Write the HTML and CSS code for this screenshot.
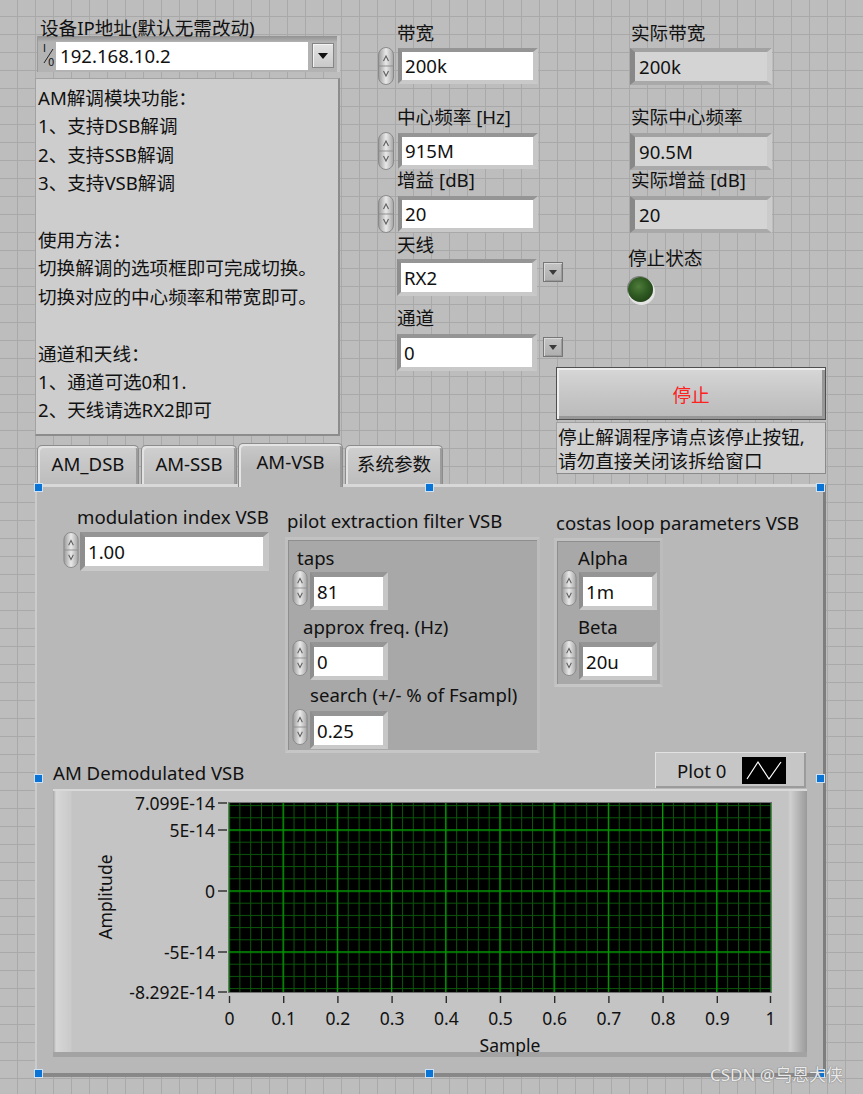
FILE: index.html
```html
<!DOCTYPE html>
<html lang="zh-CN">
<head>
<meta charset="utf-8">
<title>AM 解调</title>
<link rel="stylesheet" href="styles.css">
</head>
<body>
<svg class="defs" width="0" height="0" aria-hidden="true">
  <defs>
    <linearGradient id="spg" x1="0" y1="0" x2="1" y2="0">
      <stop offset="0" stop-color="#9a9a9a"/>
      <stop offset="0.5" stop-color="#e9e9e9"/>
      <stop offset="1" stop-color="#a4a4a4"/>
    </linearGradient>
    <symbol id="spinner" viewBox="0 0 16 38">
      <rect x="0.5" y="0.5" width="15" height="37" rx="7.5" fill="url(#spg)" stroke="#8a8a8a"/>
      <line x1="1" y1="19" x2="15" y2="19" stroke="#8f8f8f"/>
      <path d="M5.5 14 L8 9 L10.5 14" fill="none" stroke="#5e5e5e" stroke-width="1.1"/>
      <path d="M5.5 24 L8 29 L10.5 24" fill="none" stroke="#5e5e5e" stroke-width="1.1"/>
    </symbol>
  </defs>
</svg>

<div class="fp">
  <div class="top">
    <div class="col-left">
      <div class="lbl ip-lbl">设备IP地址(默认无需改动)</div>
      <div class="ipctl">
        <svg class="iosym" width="14" height="26" viewBox="0 0 14 26">
          <text x="1" y="10" class="io-t">I</text>
          <line x1="2" y1="21" x2="11" y2="7" stroke="#222" stroke-width="1"/>
          <text x="6" y="24" class="io-t">0</text>
        </svg>
        <div class="ipfld">192.168.10.2</div>
        <div class="ipbtn"><svg width="10" height="6" viewBox="0 0 10 6"><path d="M0 0 H10 L5 6 Z" fill="#111"/></svg></div>
      </div>
      <div class="note">
        <div>AM解调模块功能：</div>
        <div>1、支持DSB解调</div>
        <div>2、支持SSB解调</div>
        <div>3、支持VSB解调</div>
        <div class="gap"></div>
        <div>使用方法：</div>
        <div>切换解调的选项框即可完成切换。</div>
        <div>切换对应的中心频率和带宽即可。</div>
        <div class="gap"></div>
        <div>通道和天线：</div>
        <div>1、通道可选0和1.</div>
        <div>2、天线请选RX2即可</div>
      </div>
    </div>

    <div class="col-mid">
      <div class="lbl m-l1">带宽</div>
      <div class="num m-n1"><svg class="spin"><use href="#spinner"/></svg><div class="fld fw140">200k</div></div>
      <div class="lbl m-l2">中心频率 [Hz]</div>
      <div class="num m-n2"><svg class="spin"><use href="#spinner"/></svg><div class="fld fw140">915M</div></div>
      <div class="lbl m-l3">增益 [dB]</div>
      <div class="num m-n3"><svg class="spin"><use href="#spinner"/></svg><div class="fld fw140">20</div></div>
      <div class="lbl m-l4">天线</div>
      <div class="ring m-r1"><div class="fld rfld">RX2</div><div class="rbtn"><svg width="8" height="5" viewBox="0 0 8 5"><path d="M0 0 H8 L4 5 Z" fill="#3a3a3a"/></svg></div></div>
      <div class="lbl m-l5">通道</div>
      <div class="ring m-r2"><div class="fld rfld">0</div><div class="rbtn"><svg width="8" height="5" viewBox="0 0 8 5"><path d="M0 0 H8 L4 5 Z" fill="#3a3a3a"/></svg></div></div>
    </div>

    <div class="col-right">
      <div class="lbl r-l1">实际带宽</div>
      <div class="ind r-i1">200k</div>
      <div class="lbl r-l2">实际中心频率</div>
      <div class="ind r-i2">90.5M</div>
      <div class="lbl r-l3">实际增益 [dB]</div>
      <div class="ind r-i3">20</div>
      <div class="lbl r-l4">停止状态</div>
      <div class="led"></div>
      <div class="stop">停止</div>
      <div class="help">
        <div>停止解调程序请点该停止按钮,</div>
        <div>请勿直接关闭该拆给窗口</div>
      </div>
    </div>
  </div>

  <div class="tabctl">
    <div class="tabs">
      <div class="tab t1">AM_DSB</div>
      <div class="tab t2">AM-SSB</div>
      <div class="tab sel">AM-VSB</div>
      <div class="tab t4">系统参数</div>
    </div>
    <div class="tabpanel">
      <div class="row1">
        <div class="modblk">
          <div class="lbl mod-lbl">modulation index VSB</div>
          <div class="num mod-num"><svg class="spin s36"><use href="#spinner"/></svg><div class="fld fld-mod">1.00</div></div>
        </div>
        <div class="pilotblk">
          <div class="lbl pl-lbl">pilot extraction filter VSB</div>
          <div class="cluster pilot">
            <div class="lbl c-taps">taps</div>
            <div class="num crow"><svg class="spin s36"><use href="#spinner"/></svg><div class="fld fld-s">81</div></div>
            <div class="lbl c-appr">approx freq. (Hz)</div>
            <div class="num crow r2"><svg class="spin s36"><use href="#spinner"/></svg><div class="fld fld-s">0</div></div>
            <div class="lbl c-srch">search (+/- % of Fsampl)</div>
            <div class="num crow r3"><svg class="spin s36"><use href="#spinner"/></svg><div class="fld fld-s">0.25</div></div>
          </div>
        </div>
        <div class="costasblk">
          <div class="lbl co-lbl">costas loop parameters VSB</div>
          <div class="cluster costas">
            <div class="lbl c-alpha">Alpha</div>
            <div class="num crow"><svg class="spin s36"><use href="#spinner"/></svg><div class="fld fld-s">1m</div></div>
            <div class="lbl c-beta">Beta</div>
            <div class="num crow r2"><svg class="spin s36"><use href="#spinner"/></svg><div class="fld fld-s">20u</div></div>
          </div>
        </div>
      </div>

      <div class="ghead">
        <div class="lbl g-lbl">AM Demodulated VSB</div>
        <div class="legend">
          <span class="lg-name">Plot 0</span>
          <svg class="lg-icon" width="44" height="27" viewBox="0 0 44 27"><rect width="44" height="27" fill="#000"/><polyline points="5,22 16,5 27,22 39,5" fill="none" stroke="#fff" stroke-width="1.2"/></svg>
        </div>
      </div>

      <div class="graph">
        <svg class="chart" width="754" height="268" viewBox="0 0 754 268">
          <defs>
            <pattern id="gmv" x="175.5" y="0" width="10.84" height="268" patternUnits="userSpaceOnUse"><rect width="1" height="268" fill="#0a560a"/></pattern>
            <pattern id="gmh" x="0" y="-8.3" width="754" height="12.2" patternUnits="userSpaceOnUse"><rect width="754" height="1" fill="#0a560a"/></pattern>
            <pattern id="gMv" x="175.4" y="0" width="54.2" height="268" patternUnits="userSpaceOnUse"><rect width="1.3" height="268" fill="#009c00"/></pattern>
            <pattern id="gMh" x="0" y="-20.6" width="754" height="61" patternUnits="userSpaceOnUse"><rect width="754" height="1.3" fill="#009c00"/></pattern>
          </defs>
          <rect x="176" y="14" width="542" height="189" fill="#000"/>
          <rect x="176" y="14" width="542" height="189" fill="url(#gmv)"/>
          <rect x="176" y="14" width="542" height="189" fill="url(#gmh)"/>
          <rect x="176" y="14" width="542" height="189" fill="url(#gMv)"/>
          <rect x="176" y="14" width="542" height="189" fill="url(#gMh)"/>
          <rect x="175.5" y="13.5" width="543" height="190" fill="none" stroke="#707070"/>

          <g class="ticks">
            <line x1="165" y1="14" x2="174" y2="14"/>
            <line x1="165" y1="41" x2="174" y2="41"/>
            <line x1="165" y1="102" x2="174" y2="102"/>
            <line x1="165" y1="163" x2="174" y2="163"/>
            <line x1="165" y1="203" x2="174" y2="203"/>
            <line x1="176.5" y1="207" x2="176.5" y2="214"/>
            <line x1="230.7" y1="207" x2="230.7" y2="214"/>
            <line x1="284.9" y1="207" x2="284.9" y2="214"/>
            <line x1="339.1" y1="207" x2="339.1" y2="214"/>
            <line x1="393.3" y1="207" x2="393.3" y2="214"/>
            <line x1="447.5" y1="207" x2="447.5" y2="214"/>
            <line x1="501.7" y1="207" x2="501.7" y2="214"/>
            <line x1="555.9" y1="207" x2="555.9" y2="214"/>
            <line x1="610.1" y1="207" x2="610.1" y2="214"/>
            <line x1="664.3" y1="207" x2="664.3" y2="214"/>
            <line x1="717.5" y1="207" x2="717.5" y2="214"/>
          </g>
          <g class="ylab">
            <text x="162" y="14">7.099E-14</text>
            <text x="162" y="41">5E-14</text>
            <text x="162" y="102">0</text>
            <text x="162" y="163">-5E-14</text>
            <text x="162" y="203">-8.292E-14</text>
          </g>
          <g class="xlab">
            <text x="176.5" y="229">0</text>
            <text x="230.7" y="229">0.1</text>
            <text x="284.9" y="229">0.2</text>
            <text x="339.1" y="229">0.3</text>
            <text x="393.3" y="229">0.4</text>
            <text x="447.5" y="229">0.5</text>
            <text x="501.7" y="229">0.6</text>
            <text x="555.9" y="229">0.7</text>
            <text x="610.1" y="229">0.8</text>
            <text x="664.3" y="229">0.9</text>
            <text x="717.5" y="229">1</text>
          </g>
          <text class="xname" x="457" y="256">Sample</text>
          <text class="yname" x="52" y="108" transform="rotate(-90 52 108)">Amplitude</text>
        </svg>
      </div>
    </div>
  </div>

  <div class="hdl" style="left:34px;top:483px"></div>
  <div class="hdl" style="left:425px;top:483px"></div>
  <div class="hdl" style="left:816px;top:483px"></div>
  <div class="hdl" style="left:34px;top:774px"></div>
  <div class="hdl" style="left:816px;top:774px"></div>
  <div class="hdl" style="left:34px;top:1069px"></div>
  <div class="hdl" style="left:425px;top:1069px"></div>
  <div class="hdl" style="left:816px;top:1069px"></div>

  <div class="wm">CSDN @乌恩大侠</div>
</div>
</body>
</html>
```

FILE: styles.css
```css
* { box-sizing: border-box; }
html, body { margin: 0; padding: 0; }
body {
  font-family: "Noto Sans", "Noto Sans CJK SC", sans-serif;
  font-size: 18.6px;
  color: #111;
  background: #bdbdbd;
}
.defs { position: absolute; width: 0; height: 0; overflow: hidden; }

.fp {
  position: relative;
  width: 863px;
  height: 1094px;
  overflow: hidden;
  background-color: #bdbdbd;
  background-image:
    linear-gradient(to bottom, #a9a9a9 1px, transparent 1px),
    linear-gradient(to right, #a9a9a9 1px, transparent 1px);
  background-size: 18px 18px;
  background-position: 17px 16px;
}

.lbl { height: 22px; line-height: 22px; white-space: nowrap; }

/* ---------- top area ---------- */
.top { display: flex; height: 443px; }
.col-left { margin-left: 35px; width: 306px; flex: none; }
.col-mid { margin-left: 37px; width: 178px; flex: none; }
.col-right { width: 270px; flex: none; }

.ip-lbl { margin: 17px 0 0 5px; }
.ipctl {
  margin: -3px 0 0 2px;
  width: 303px;
  height: 36px;
  display: flex;
  align-items: flex-start;
  padding: 6px 0 0 5px;
  background: linear-gradient(to bottom, #939393 0, #a6a6a6 4px, #b3b3b3 6px);
  box-shadow: inset -3px 0 0 #c9c9c9, inset 1px 0 0 #9a9a9a;
}
.iosym { width: 14px; height: 26px; flex: none; }
.io-t { font-family: "DejaVu Sans", sans-serif; font-size: 10px; fill: #111; }
.ipfld {
  width: 252px; height: 28px; line-height: 28px;
  background: #fff; padding-left: 4px; flex: none;
}
.ipbtn {
  margin: 1px 0 0 4px; width: 22px; height: 25px; flex: none;
  display: flex; align-items: center; justify-content: center;
  background: linear-gradient(#e3e3e3, #c9c9c9);
  border: 1px solid #858585;
  box-shadow: inset 1px 1px 0 #f4f4f4;
}

.note {
  margin-top: 6px;
  width: 305px;
  height: 358px;
  background: #cdcdcd;
  border: 1px solid #a2a2a2;
  border-right: 2px solid #8c8c8c;
  border-bottom: 2px solid #8c8c8c;
  padding: 5px 2px;
  line-height: 28.4px;
  white-space: nowrap;
}
.note .gap { height: 28.4px; }

/* numeric controls */
.num { display: flex; align-items: center; }
.spin { width: 16px; height: 38px; flex: none; display: block; }
.spin.s36 { height: 36px; }
.fld {
  background: #fff;
  border-style: solid;
  border-width: 4px 5px 4px 4px;
  border-color: #959595 #c6c6c6 #c9c9c9 #8e8e8e;
  height: 36px;
  line-height: 28px;
  padding-left: 3px;
  margin-left: 4px;
  white-space: nowrap;
  flex: none;
}
.fw140 { width: 140px; }

.m-l1 { margin: 22px 0 0 19px; }
.m-n1 { margin-top: 3px; }
.m-l2 { margin: 21px 0 0 19px; }
.m-n2 { margin-top: 4px; }
.m-l3 { margin: -1px 0 0 19px; }
.m-n3 { margin-top: 4px; }
.m-l4 { margin: 1px 0 0 19px; }
.ring { display: flex; align-items: flex-start; margin-left: 19px; }
.m-r1 { margin-top: 3px; }
.m-l5 { margin: 11px 0 0 19px; }
.m-r2 { margin-top: 5px; }
.rfld { margin-left: 0; width: 140px; height: 37px; line-height: 29px; }
.rbtn {
  margin: 3px 0 0 6px; width: 20px; height: 20px; flex: none;
  display: flex; align-items: center; justify-content: center;
  background: linear-gradient(#c4c4c4, #aeaeae);
  border: 1px solid #767676;
  box-shadow: inset 1px 1px 0 #dadada, inset -1px -1px 0 #9a9a9a;
}

/* right column */
.r-l1 { margin: 22px 0 0 75px; }
.ind {
  margin-left: 74px;
  width: 142px;
  height: 37px;
  line-height: 29px;
  padding-left: 4px;
  background: #d4d4d4;
  border-style: solid;
  border-width: 4px 5px 4px 5px;
  border-color: #a2a2a2 #cbcbcb #a9a9a9 #888888;
  white-space: nowrap;
}
.r-i1 { margin-top: 4px; }
.r-l2 { margin: 21px 0 0 75px; }
.r-i2 { margin-top: 5px; }
.r-l3 { margin: -1px 0 0 75px; }
.r-i3 { margin-top: 5px; }
.r-l4 { margin: 14px 0 0 72px; }
.led {
  margin: 8px 0 0 72px;
  width: 25px; height: 25px;
  border-radius: 50%;
  background: radial-gradient(circle at 42% 38%, #4f7d3b 0, #2f5a22 45%, #1a3411 100%);
  box-shadow: 1px 2px 0 1px #e4e4e4, -1px -1px 0 #7e7e7e;
}
.stop {
  margin-top: 65px;
  width: 270px;
  height: 53px;
  border: 1px solid #4f4f4f;
  background: linear-gradient(#d7d7d7, #c4c4c4 60%, #bababa);
  box-shadow: inset 2px 2px 0 #eeeeee, inset -3px -3px 0 #979797;
  color: #ff2020;
  display: flex; align-items: center; justify-content: center;
}
.help {
  margin-top: 2px;
  height: 52px;
  background: #cfcfcf;
  border: 1px solid #a0a0a0;
  border-right-color: #8a8a8a;
  border-bottom-color: #8a8a8a;
  padding: 2px 1px;
  line-height: 23.5px;
  white-space: nowrap;
}

/* ---------- tab control ---------- */
.tabctl { margin-left: 35px; width: 791px; }
.tabs { display: flex; align-items: flex-end; height: 41px; padding-left: 2px; }
.tab {
  height: 39px;
  line-height: 36px;
  text-align: center;
  border: 1px solid #8c8c8c;
  border-bottom: none;
  border-radius: 5px 5px 0 0;
  background: linear-gradient(#d0d0d0, #bdbdbd);
  box-shadow: inset 2px 2px 0 #e2e2e2, inset -2px 0 0 #9c9c9c;
  white-space: nowrap;
  flex: none;
}
.t1 { width: 102px; margin-right: 2px; }
.t2 { width: 96px; margin-right: 1px; }
.tab.sel {
  width: 105px;
  height: 44px;
  margin-bottom: -3px;
  margin-right: 2px;
  position: relative;
  z-index: 1;
  background: linear-gradient(#c9c9c9, #b8b8b8 60%);
  box-shadow: inset 2px 2px 0 #e4e4e4, inset -2px 0 0 #9a9a9a;
}
.t4 { width: 98px; }

.tabpanel {
  height: 593px;
  background: #b8b8b8;
  border-top: 3px solid #d8d8d8;
  border-left: 2px solid #cbcbcb;
  border-right: 3px solid #7e7e7e;
  border-bottom: 4px solid #888888;
}

.row1 { display: flex; align-items: flex-start; height: 266px; }
.modblk { margin: 19px 0 0 26px; width: 205px; flex: none; }
.mod-lbl { margin-left: 14px; }
.mod-num { margin-top: 4px; align-items: flex-start; }
.fld-mod {
  margin-left: 1px; width: 189px; height: 39px; line-height: 29px;
  border-width: 5px 6px 5px 5px;
}
.pilotblk { margin: 23px 0 0 17px; width: 255px; flex: none; }
.pl-lbl { margin-left: 2px; }
.cluster {
  background: #a8a8a8;
  border: 3px solid;
  border-color: #c2c2c2 #bcbcbc #c6c6c6 #c0c0c0;
  box-shadow: inset 1px 1px 0 #8e8e8e;
}
.pilot { margin-top: 5px; height: 216px; }
.costasblk { margin: 25px 0 0 14px; width: 270px; flex: none; }
.co-lbl { margin-left: 2px; }
.costas { margin-top: 4px; width: 109px; height: 149px; }

.crow { margin: 1px 0 0 4px; align-items: flex-start; height: 40px; }
.crow .fld { margin: 2px 0 0 2px; width: 78px; height: 38px; line-height: 29px; border-width: 5px 5px 4px 4px; }
.crow.r2 { margin-top: 2px; }
.crow.r3 { margin-top: 3px; }
.c-taps { margin: 7px 0 0 9px; }
.c-appr { margin: 6px 0 0 15px; }
.c-srch { margin: 4px 0 0 22px; }
.c-alpha { margin: 6px 0 0 21px; }
.c-beta { margin: 6px 0 0 21px; }

.ghead { display: flex; align-items: flex-start; height: 37px; margin-top: -1px; }
.g-lbl { margin: 10px 0 0 16px; }
.legend {
  margin-left: auto;
  margin-right: 17px;
  width: 151px;
  height: 36px;
  display: flex;
  align-items: center;
  padding-left: 22px;
  background: #c6c6c6;
  box-shadow: inset 1px 1px 0 #e2e2e2, inset -2px -2px 0 #9b9b9b;
}
.lg-icon { margin-left: auto; margin-right: 20px; display: block; }

.graph {
  margin-left: 16px;
  width: 754px;
  height: 268px;
  background: linear-gradient(90deg, #a4a4a4 0, #d7d7d7 3px, #cacaca 18px, #c4c4c4 19px, #c4c4c4 735px, #d0d0d0 737px, #9a9a9a 754px);
  box-shadow: inset 0 2px 0 #d9d9d9, inset 0 -5px 0 #a3a3a3;
}
.chart { display: block; }
.chart text { font-family: "Noto Sans", sans-serif; font-size: 17.5px; fill: #111; }
.ticks line { stroke: #2a2a2a; stroke-width: 1.4; }
.ylab text { text-anchor: end; dominant-baseline: central; }
.xlab text { text-anchor: middle; dominant-baseline: central; }
.chart .xname { text-anchor: middle; dominant-baseline: central; }
.chart .yname { text-anchor: middle; dominant-baseline: central; }

.hdl {
  position: absolute;
  width: 9px;
  height: 9px;
  background: #0a74d6;
  border: 1px solid #cfe2f5;
}
.wm {
  position: absolute;
  left: 710px;
  top: 1063px;
  line-height: 24px;
  font-size: 17px;
  color: rgba(255, 255, 255, 0.85);
  text-shadow: 0 0 1px #7a7a7a, 0 0 1px #7a7a7a;
  white-space: nowrap;
}
```
